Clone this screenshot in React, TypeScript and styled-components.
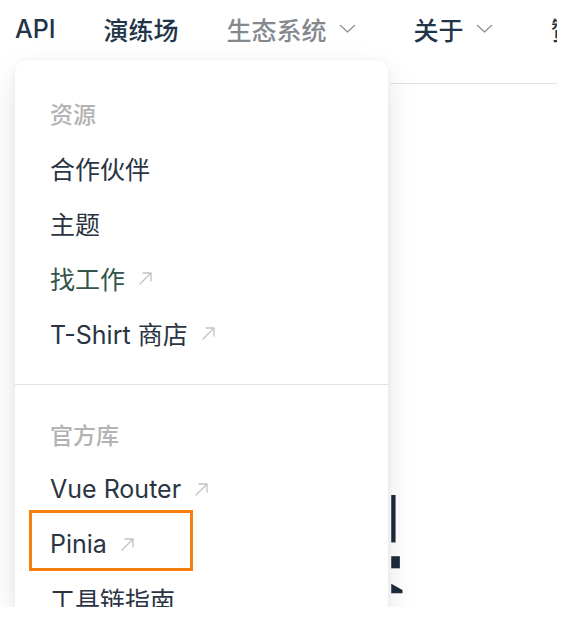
import React from "react";
import styled, { createGlobalStyle } from "styled-components";

const GlobalStyle = createGlobalStyle`
    html, body {
        margin: 0;
        padding: 0;
        background: #ffffff;
    }
    body {
        font-family: Inter, "Noto Sans CJK SC", "Noto Sans", sans-serif;
        -webkit-font-smoothing: antialiased;
    }
`;

type NavItem = { label: string; dim?: boolean; dropdown?: boolean };
type MenuLink = { label: string; external?: boolean; tone?: "green"; marked?: boolean };
type MenuGroup = { title: string; links: MenuLink[] };

const NAV: NavItem[] = [
    { label: "API" },
    { label: "演练场" },
    { label: "生态系统", dim: true, dropdown: true },
    { label: "关于", dropdown: true },
    { label: "赞助" },
];

const GROUPS: MenuGroup[] = [
    {
        title: "资源",
        links: [
            { label: "合作伙伴" },
            { label: "主题" },
            { label: "找工作", external: true, tone: "green" },
            { label: "T-Shirt 商店", external: true },
        ],
    },
    {
        title: "官方库",
        links: [
            { label: "Vue Router", external: true },
            { label: "Pinia", external: true, marked: true },
            { label: "工具链指南" },
        ],
    },
];

const Chevron = () => (
    <svg width="17" height="10" viewBox="0 0 17 10" fill="none">
        <path d="M1.5 1.5 L8.5 8 L15.5 1.5" stroke="currentColor" strokeWidth="1.4" strokeLinecap="round" strokeLinejoin="round" />
    </svg>
);

const ArrowOut = () => (
    <svg width="15" height="15" viewBox="0 0 15 15" fill="none">
        <path d="M2 13 L13 2 M5 2 H13 V10" stroke="currentColor" strokeWidth="1.3" strokeLinecap="round" strokeLinejoin="round" />
    </svg>
);

const App: React.FC = () => {
    return (
        <>
            <GlobalStyle />
            <_Frame>
                <_Nav>
                    {NAV.map((item) => (
                        <_NavLink key={item.label} $dim={item.dim}>
                            {item.label}
                            {item.dropdown ? (
                                <_Caret>
                                    <Chevron />
                                </_Caret>
                            ) : null}
                        </_NavLink>
                    ))}
                </_Nav>
                <_Body>
                    <_Panel>
                        {GROUPS.map((group) => (
                            <_Group key={group.title}>
                                <_GroupTitle>{group.title}</_GroupTitle>
                                {group.links.map((link) => (
                                    <_Item key={link.label} $tone={link.tone}>
                                        {link.label}
                                        {link.external ? (
                                            <_Ext>
                                                <ArrowOut />
                                            </_Ext>
                                        ) : null}
                                        {link.marked ? <_Mark /> : null}
                                    </_Item>
                                ))}
                            </_Group>
                        ))}
                    </_Panel>
                    <_Aside>
                        <_Rule />
                        <_Glyph width="20" height="130" viewBox="0 0 20 130">
                            <rect x="1" y="0" width="5" height="55" fill="#1e2a3d" />
                            <rect x="1" y="71" width="10" height="14" fill="#1e2a3d" />
                            <path d="M1 103 L14 110 L14 114 L1 114 Z" fill="#1e2a3d" />
                        </_Glyph>
                    </_Aside>
                </_Body>
            </_Frame>
        </>
    );
};

export default App;

const _Frame = styled.div`
    width: 557px;
    height: 607px;
    overflow: hidden;
    display: flex;
    flex-direction: column;
    background: #ffffff;
`;

const _Nav = styled.nav`
    display: flex;
    align-items: center;
    height: 60px;
    padding: 0 0 2px 15px;
    box-sizing: border-box;
    gap: 48px;
    white-space: nowrap;
`;

const _NavLink = styled.span<{ $dim?: boolean }>`
    display: flex;
    align-items: center;
    font-size: 25px;
    font-weight: 500;
    color: ${(p) => (p.$dim ? "#85898e" : "#213547")};
`;

const _Caret = styled.span`
    display: flex;
    margin-left: 12px;
    margin-right: 10px;
    color: #8e9399;
`;

const _Body = styled.div`
    display: flex;
    flex: 1;
    min-height: 0;
`;

const _Panel = styled.div`
    position: relative;
    z-index: 1;
    margin-left: 15px;
    width: 373px;
    flex-shrink: 0;
    background: #ffffff;
    border-radius: 12px 12px 0 0;
    box-shadow: 0 12px 32px rgba(0, 0, 0, 0.1), 0 2px 6px rgba(0, 0, 0, 0.06);
    padding-top: 25px;
    box-sizing: border-box;
`;

const _Group = styled.div`
    padding: 0 0 24px 35px;
    & + & {
        border-top: 1px solid #e2e2e3;
        padding-top: 21px;
    }
`;

const _GroupTitle = styled.div`
    height: 55px;
    display: flex;
    align-items: center;
    font-size: 23px;
    font-weight: 500;
    color: #b3b3b3;
`;

const _Item = styled.div<{ $tone?: "green" }>`
    position: relative;
    height: 55px;
    display: flex;
    align-items: center;
    font-size: 25px;
    font-weight: 400;
    color: ${(p) => (p.$tone === "green" ? "#32544a" : "#2a3442")};
    white-space: nowrap;
`;

const _Ext = styled.span`
    display: flex;
    margin-left: 13px;
    margin-top: 2px;
    color: #c2c2c2;
`;

const _Mark = styled.span`
    position: absolute;
    left: -21px;
    top: -6px;
    width: 164px;
    height: 61px;
    border: 3px solid #f57f0c;
    box-sizing: border-box;
`;

const _Aside = styled.div`
    flex: 1;
    display: flex;
    flex-direction: column;
    padding-left: 2px;
`;

const _Rule = styled.div`
    margin-top: 23px;
    height: 1px;
    background: #e3e3e3;
`;

const _Glyph = styled.svg`
    margin-top: 411px;
    margin-left: -1px;
`;
